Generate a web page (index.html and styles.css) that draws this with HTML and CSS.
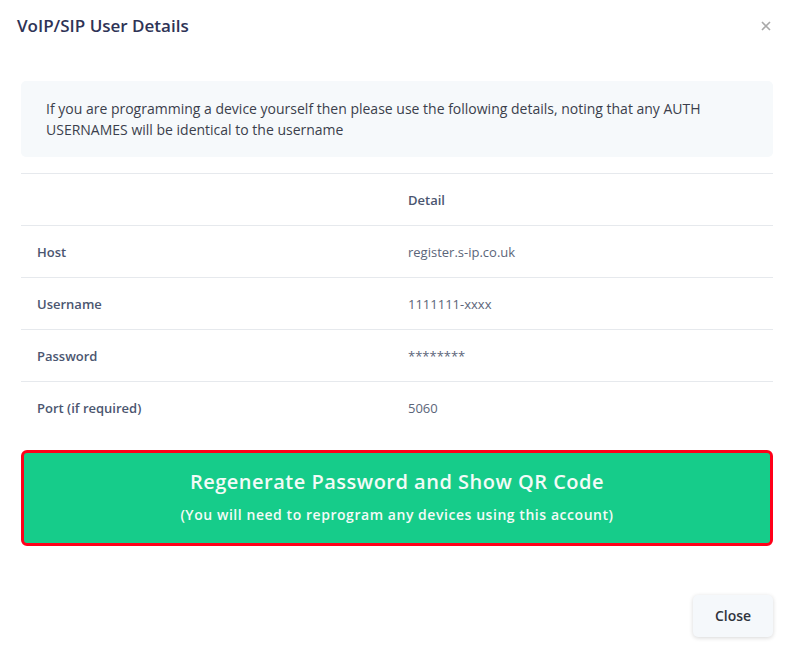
FILE: index.html
```html
<!DOCTYPE html>
<html lang="en">
<head>
<meta charset="utf-8">
<title>VoIP/SIP User Details</title>
<link rel="stylesheet" href="styles.css">
</head>
<body>
<div class="modal">
  <div class="modal-header">
    <h2 class="modal-title">VoIP/SIP User Details</h2>
    <button class="btn-x" aria-label="Close">
      <svg width="10" height="10" viewBox="0 0 10 10"><path d="M1 1L9 9M9 1L1 9" stroke="#a9a9a9" stroke-width="1.6" fill="none"/></svg>
    </button>
  </div>
  <div class="modal-body">
    <div class="info">If you are programming a device yourself then please use the following details, noting that any AUTH USERNAMES will be identical to the username</div>
    <table class="details">
      <thead>
        <tr><th class="c1"></th><th class="c2">Detail</th></tr>
      </thead>
      <tbody>
        <tr><td class="c1">Host</td><td class="c2">register.s-ip.co.uk</td></tr>
        <tr><td class="c1">Username</td><td class="c2">1111111-xxxx</td></tr>
        <tr><td class="c1">Password</td><td class="c2">********</td></tr>
        <tr><td class="c1">Port (if required)</td><td class="c2">5060</td></tr>
      </tbody>
    </table>
    <button class="regen">
      <span class="regen-title">Regenerate Password and Show QR Code</span>
      <span class="regen-sub">(You will need to reprogram any devices using this account)</span>
    </button>
  </div>
  <div class="modal-footer">
    <button class="btn-close">Close</button>
  </div>
</div>
</body>
</html>
```
FILE: styles.css
```css
* { box-sizing: border-box; }
html, body { margin: 0; padding: 0; background: #fff; }
body {
  font-family: "Open Sans", "Noto Sans", sans-serif;
  color: #3d4150;
}
.modal { width: 793px; height: 655px; background: #fff; }
.modal-header {
  height: 52px;
  display: flex;
  align-items: center;
  justify-content: space-between;
  padding: 0 22px 0 17px;
}
.modal-title {
  margin: 0;
  font-size: 17px;
  font-weight: 600;
  line-height: 24px;
  color: #2e3356;
}
.btn-x {
  border: 0;
  background: none;
  padding: 0;
  width: 10px;
  height: 10px;
  display: flex;
}
.modal-body { padding: 29px 20px 0 21px; }
.info {
  background: #f6f9fb;
  border-radius: 5px;
  padding: 17px 60px 17px 25px;
  font-size: 14px;
  line-height: 21px;
  color: #3b3f4c;
}
.details {
  width: 100%;
  margin-top: 16px;
  border-collapse: collapse;
  font-size: 13px;
}
.details th, .details td {
  height: 52px;
  border-top: 1px solid #e6e9ed;
  text-align: left;
  vertical-align: middle;
  padding: 0 16px;
}
.details th { font-weight: 600; color: #4b5670; }
.details .c1 { width: 371px; }
.details td.c1 { font-weight: 600; color: #4b5670; }
.details td.c2 { color: #5b6579; }
.regen {
  display: flex;
  flex-direction: column;
  align-items: center;
  width: 100%;
  height: 96px;
  margin-top: 16px;
  padding: 15px 0 0;
  background: #16cc8a;
  border: 3px solid #ff0019;
  border-radius: 6px;
  color: #f3fbf7;
  font-family: inherit;
}
.regen-title {
  font-size: 20px;
  font-weight: 600;
  line-height: 28px;
  letter-spacing: 0.5px;
}
.regen-sub {
  margin-top: 9px;
  font-size: 14px;
  font-weight: 600;
  line-height: 20px;
  letter-spacing: 0.55px;
}
.modal-footer {
  display: flex;
  justify-content: flex-end;
  padding: 49px 20px 0;
}
.btn-close {
  width: 80px;
  height: 42px;
  border: 0;
  border-radius: 5px;
  background: #f5f8fb;
  box-shadow: 0 1px 4px rgba(0,0,0,0.16);
  font-family: inherit;
  font-size: 14px;
  font-weight: 600;
  color: #30343d;
}
```
